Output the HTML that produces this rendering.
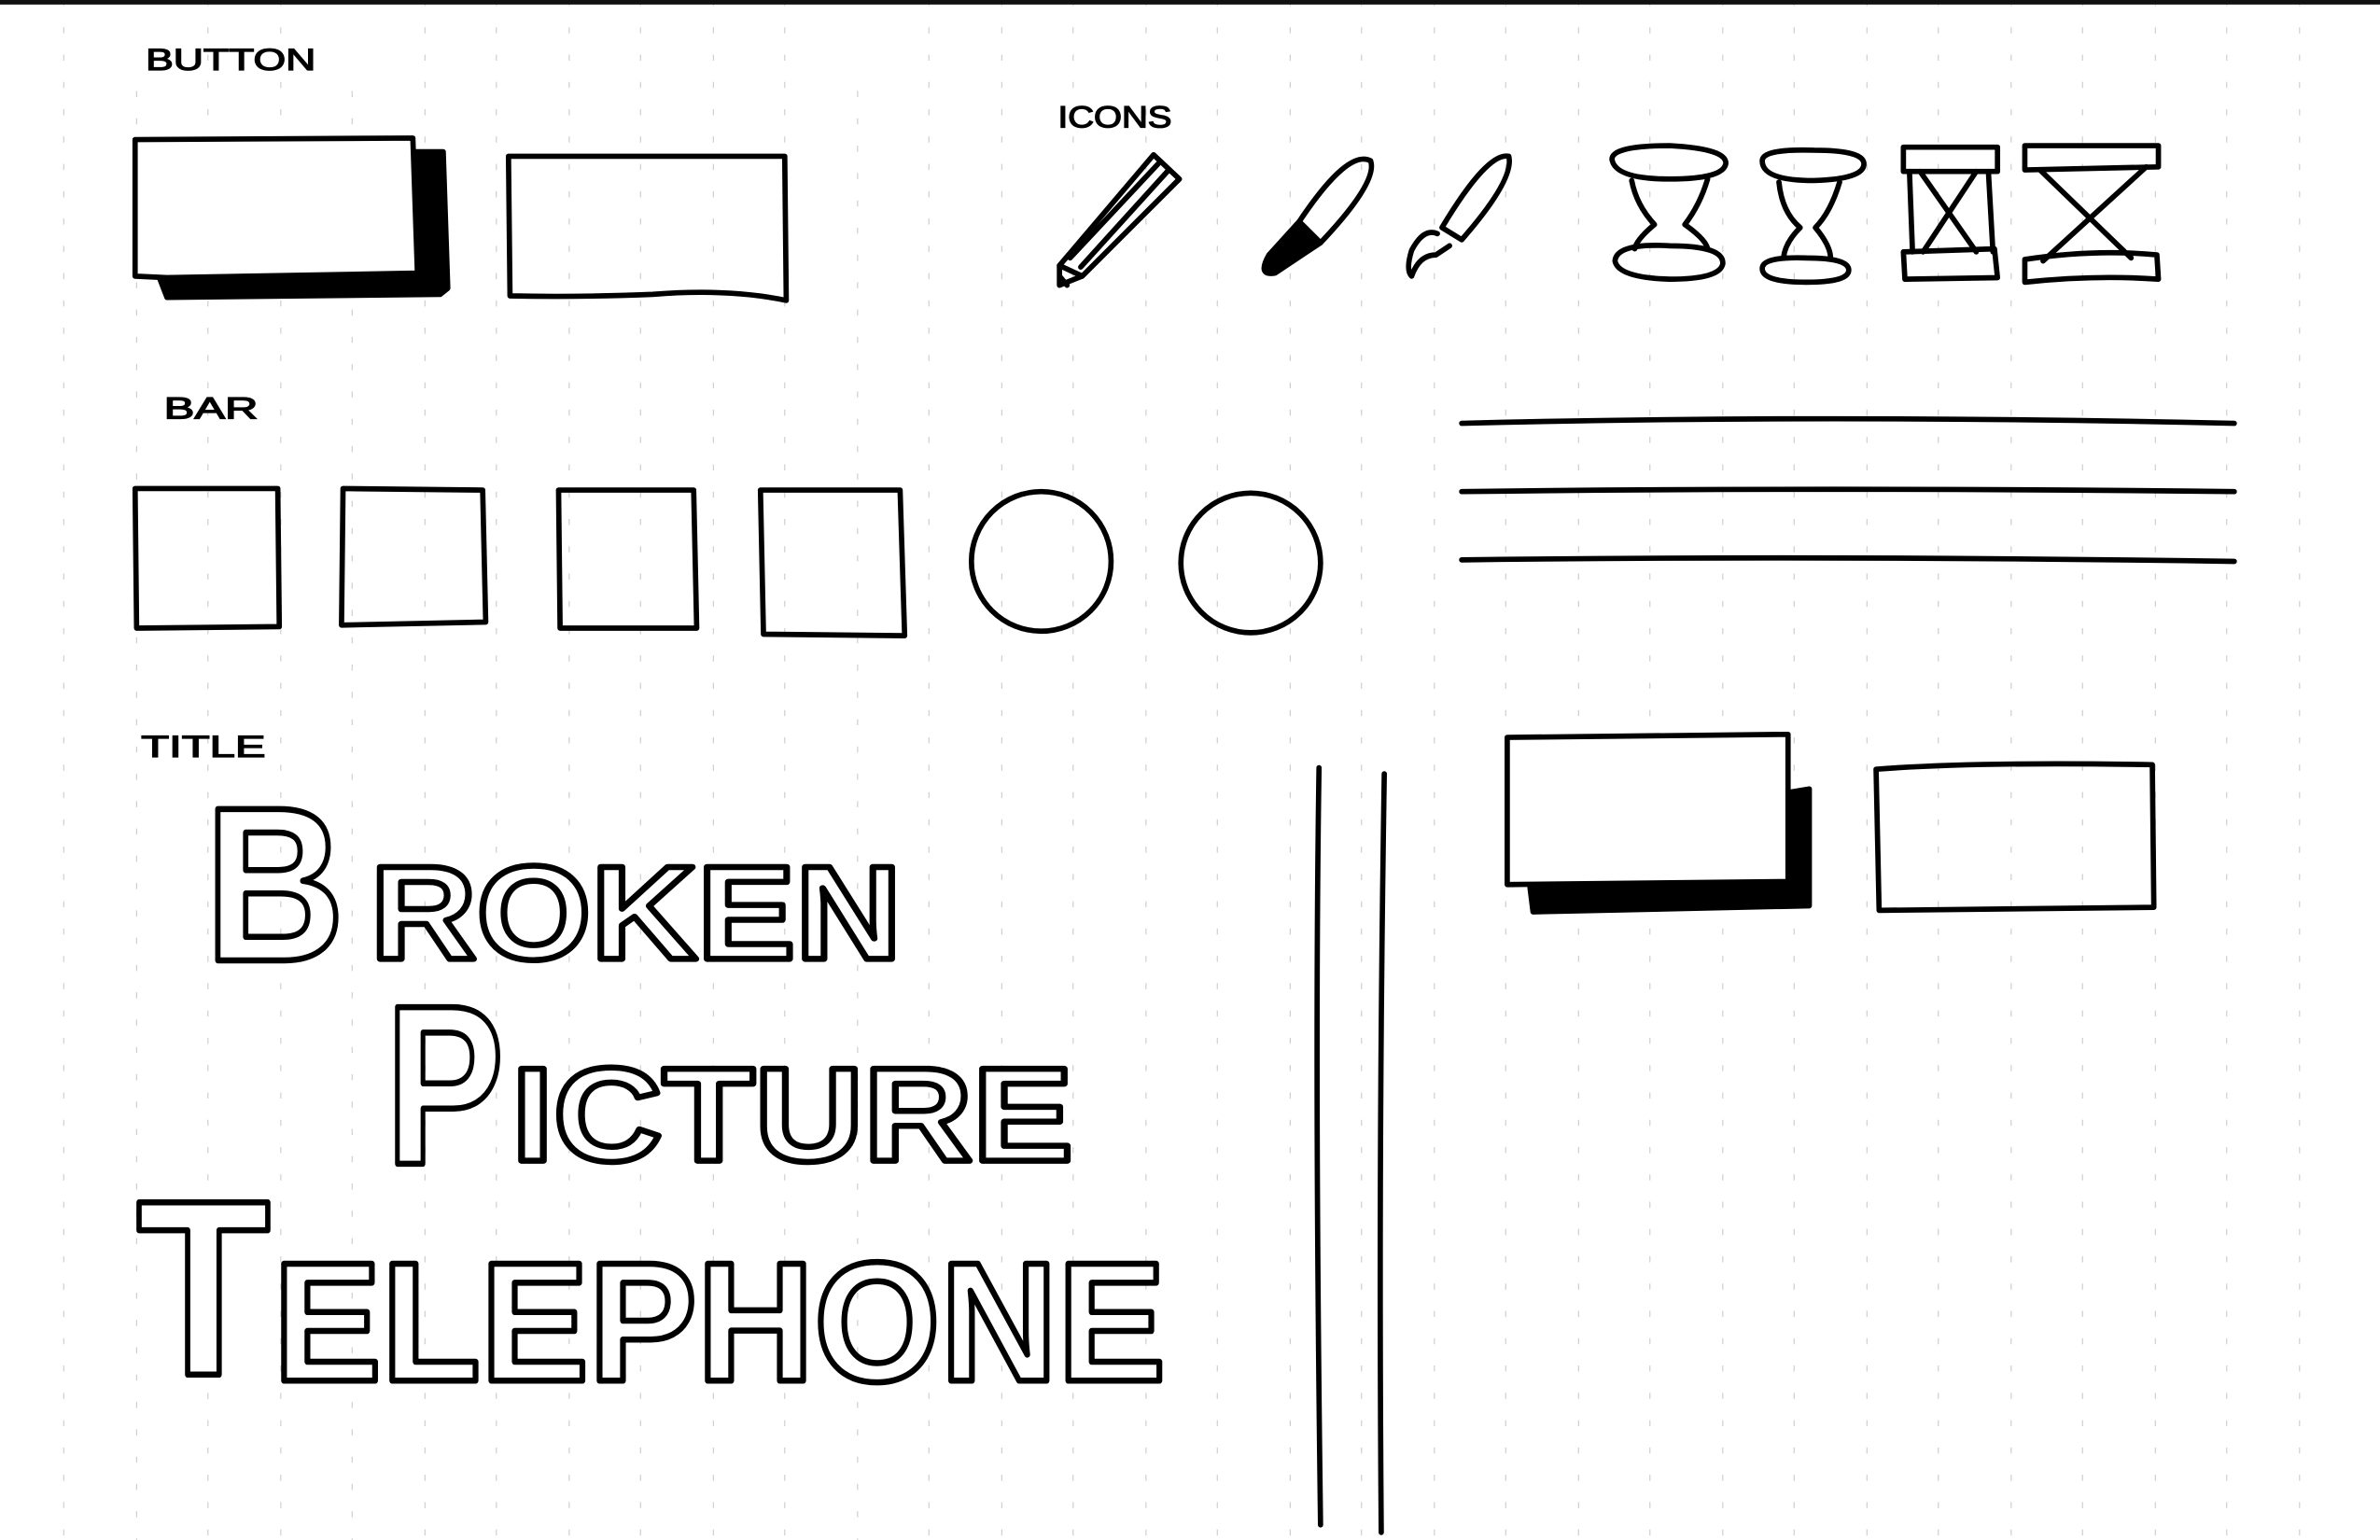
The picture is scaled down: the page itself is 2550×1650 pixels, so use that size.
<!DOCTYPE html>
<html><head><meta charset="utf-8"><style>
html,body{margin:0;padding:0;background:#fff;}
svg{display:block;}
text{font-family:"Liberation Sans",sans-serif;}
</style></head><body>
<svg width="2550" height="1650" viewBox="0 0 1568 1015" preserveAspectRatio="none" xmlns="http://www.w3.org/2000/svg">
<rect width="1568" height="1015" fill="#fff"/>
<g stroke="#ccc" stroke-width="0.7" stroke-dasharray="4 14">
<path d="M42 0V1015M90 60V1015M137 0V1015M185 0V1015M232 60V1015M280 0V1015M327 0V1015M375 0V1015M422 0V1015M470 0V1015M517 0V1015M565 60V1015M612 0V1015M660 0V1015M707 0V1015M755 0V1015M802 0V1015M850 0V1015M897 0V1015M945 0V1015M992 0V1015M1040 0V1015M1087 0V1015M1135 0V1015M1182 0V1015M1230 0V1015M1277 0V1015M1325 0V1015M1372 0V1015M1420 0V1015M1467 0V1015M1515 0V1015"/>
</g>
<rect x="0" y="0" width="1568" height="3" fill="#111"/>
<g fill="none" stroke="#000" stroke-width="3.5" stroke-linecap="round" stroke-linejoin="round">
<path d="M272 100 L292 100 L295 190 L290 194 L110 196 L105 183 L275 180 Z" fill="#000"/>
<path d="M89 92 L272 91 L275 180 L110 183 L89 182 Z" fill="#fff"/>
<path d="M335 103 L517 103 L518 198 Q480 190 430 194 Q380 196 336 195 Z"/>
<path d="M1180 522 L1192 520 L1192 597 L1010 601 L1008 585 L1178 582 Z" fill="#000"/>
<path d="M993 486 L1178 484 L1178 581 L993 583 Z" fill="#fff"/>
<path d="M1236 507 Q1300 502 1418 504 L1419 598 L1238 600 Z"/>
<path d="M89 322 L183 322 L184 413 L90 414 Z"/>
<path d="M226 322 L318 323 L320 410 L225 412 Z"/>
<path d="M368 323 L457 323 L459 414 L369 414 Z"/>
<path d="M501 323 L593 323 L596 419 L503 418 Z"/>
<ellipse cx="686" cy="370" rx="46" ry="46"/>
<ellipse cx="824" cy="371" rx="46" ry="46"/>
<path d="M963 279 Q1200 273 1472 279"/>
<path d="M963 324 Q1200 321 1472 324"/>
<path d="M963 369 Q1200 366 1472 370"/>
<path d="M869 506 Q866 700 870 1005"/>
<path d="M912 510 Q908 760 910 1010"/>
<path d="M698 175 L760 102 L777 118 L713 182 Z"/>
<path d="M705 170 L763 108 M712 176 L770 112"/>
<path d="M698 175 L698 188 L713 182 M698 182 L703 188"/>
<path d="M856 146 Q888 98 903 106 Q908 120 870 160 Z"/>
<path d="M856 146 L836 168 Q828 182 840 180 Q858 168 870 160" fill="#000"/>
<path d="M950 150 Q980 100 994 103 Q998 118 963 158 Z"/>
<path d="M947 154 Q938 150 930 165 Q926 178 930 182 Q935 168 946 168 L955 162"/>
<path d="M1062 105 Q1062 96 1100 96 Q1138 98 1137 108 Q1135 118 1100 118 Q1064 118 1062 105 Z"/>
<path d="M1064 172 Q1065 160 1100 162 Q1136 162 1135 174 Q1133 184 1100 184 Q1066 183 1064 172 Z"/>
<path d="M1075 119 Q1078 135 1090 148 Q1078 158 1077 164 M1125 118 Q1120 135 1110 148 Q1124 158 1125 164"/>
<path d="M1161 106 Q1161 98 1195 99 Q1228 99 1228 108 Q1228 118 1195 119 Q1161 119 1161 106 Z"/>
<path d="M1161 177 Q1161 169 1190 170 Q1218 170 1218 178 Q1218 186 1190 186 Q1161 186 1161 177 Z"/>
<path d="M1172 120 Q1174 140 1186 150 Q1176 160 1175 170 M1212 120 Q1206 140 1196 150 Q1206 162 1206 170"/>
<path d="M1254 97 L1316 97 L1316 113 L1254 113 Z"/>
<path d="M1254 166 L1314 164 L1316 183 L1255 184 Z"/>
<path d="M1258 113 L1260 166 M1310 113 L1313 166 M1265 113 L1302 166 M1302 113 L1267 166"/>
<path d="M1334 96 L1422 96 L1422 110 L1334 112 Z"/>
<path d="M1334 171 Q1380 164 1421 168 L1422 184 Q1380 181 1334 186 Z"/>
<path d="M1344 112 L1404 170 M1414 110 L1346 172"/>
</g>
<g font-size="20" fill="#000" stroke="#000" stroke-width="0.8" font-family="Liberation Sans, sans-serif">
<text x="96" y="46" textLength="112" lengthAdjust="spacingAndGlyphs">BUTTON</text>
<text x="697" y="84" textLength="75" lengthAdjust="spacingAndGlyphs">ICONS</text>
<text x="108" y="276" textLength="62" lengthAdjust="spacingAndGlyphs">BAR</text>
<text x="93" y="499" textLength="82" lengthAdjust="spacingAndGlyphs">TITLE</text>
</g>
<g fill="#fff" stroke="#000" stroke-width="4" font-weight="bold" font-family="Liberation Sans, sans-serif" stroke-linejoin="round">
<text x="135" y="633" font-size="145" textLength="92" lengthAdjust="spacingAndGlyphs">B</text>
<text x="244" y="632" font-size="88" textLength="350" lengthAdjust="spacingAndGlyphs">ROKEN</text>
<text x="254" y="767" font-size="150" textLength="78" lengthAdjust="spacingAndGlyphs">P</text>
<text x="337" y="765" font-size="88" textLength="370" lengthAdjust="spacingAndGlyphs">ICTURE</text>
<text x="90" y="906" font-size="165" textLength="88" lengthAdjust="spacingAndGlyphs">T</text>
<text x="180" y="910" font-size="112" textLength="588" lengthAdjust="spacingAndGlyphs">ELEPHONE</text>
</g>
</svg>
</body></html>
